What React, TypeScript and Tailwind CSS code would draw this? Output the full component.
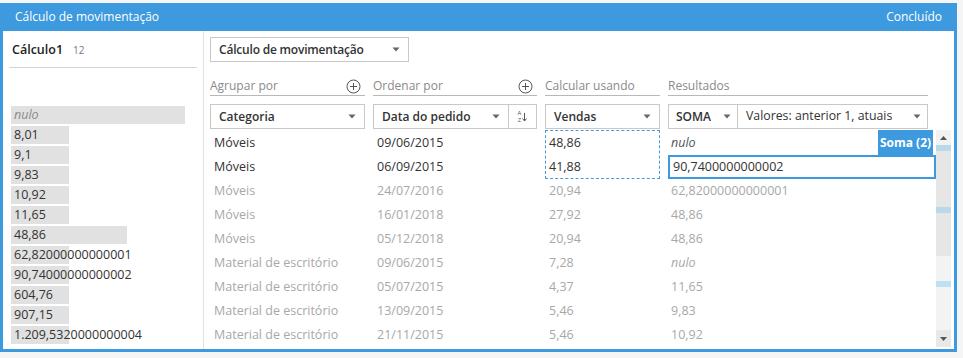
import React from "react";

const leftRows: { t: string; w: number; italic?: boolean }[] = [
  { t: "nulo", w: 174, italic: true },
  { t: "8,01", w: 58 },
  { t: "9,1", w: 58 },
  { t: "9,83", w: 58 },
  { t: "10,92", w: 58 },
  { t: "11,65", w: 58 },
  { t: "48,86", w: 116 },
  { t: "62,82000000000001", w: 58 },
  { t: "90,74000000000002", w: 58 },
  { t: "604,76", w: 58 },
  { t: "907,15", w: 58 },
  { t: "1.209,5320000000004", w: 58 },
];

const rows = [
  ["Móveis", "09/06/2015", "48,86", "nulo"],
  ["Móveis", "06/09/2015", "41,88", "90,7400000000002"],
  ["Móveis", "24/07/2016", "20,94", "62,82000000000001"],
  ["Móveis", "16/01/2018", "27,92", "48,86"],
  ["Móveis", "05/12/2018", "20,94", "48,86"],
  ["Material de escritório", "09/06/2015", "7,28", "nulo"],
  ["Material de escritório", "05/07/2015", "4,37", "11,65"],
  ["Material de escritório", "13/09/2015", "5,46", "9,83"],
  ["Material de escritório", "21/11/2015", "5,46", "10,92"],
];

function Tri() {
  return (
    <svg width="8" height="5" viewBox="0 0 8 5" className="shrink-0">
      <path d="M0.5 0.5 L7.5 0.5 L4 4.5 Z" fill="#666" />
    </svg>
  );
}

function PlusCircle() {
  return (
    <svg width="15" height="15" viewBox="0 0 15 15" className="shrink-0">
      <circle cx="7.5" cy="7.5" r="6.5" fill="none" stroke="#555" strokeWidth="1" />
      <path d="M7.5 4 V11 M4 7.5 H11" stroke="#555" strokeWidth="1" />
    </svg>
  );
}

function Cell({
  children,
  h = 24,
  dim,
  italic,
  cls = "",
}: {
  children: React.ReactNode;
  h?: number;
  dim?: boolean;
  italic?: boolean;
  cls?: string;
}) {
  return (
    <div
      className={`flex items-center whitespace-nowrap pt-[1px] ${h === 25 ? "h-[25px]" : h === 23 ? "h-[23px]" : "h-[24px]"} ${
        dim ? "text-[#a8a8a8]" : "text-[#333]"
      } ${italic ? "italic" : ""} ${cls}`}
    >
      {children}
    </div>
  );
}

export default function App() {
  return (
    <div
      className="w-[963px] h-[358px] bg-[#f5f5f5] pt-[3px] text-[12px]"
      style={{ fontFamily: '"Open Sans", "Noto Sans", sans-serif' }}
    >
      <div className="w-[957px] h-[349px] bg-[#3d9ade] flex flex-col">
        {/* Header */}
        <div className="h-[28px] flex items-center justify-between pl-[15px] pr-[15px] text-white text-[12px]">
          <span>Cálculo de movimentação</span>
          <span>Concluído</span>
        </div>
        {/* Body */}
        <div className="mx-[3px] mb-[3px] flex-1 bg-white flex">
          {/* Left panel */}
          <div className="w-[201px] border-r border-[#e2e2e2] flex flex-col">
            <div className="mx-[6px] h-[37px] border-b border-[#d4d4d4] flex items-center pl-[3px] pt-[2px]">
              <span className="text-[#222] font-semibold text-[12.5px]">Cálculo1</span>
              <span className="ml-[10px] text-[10px] text-[#7d7390]">12</span>
            </div>
            <div className="mt-[38px] pl-[8px] flex flex-col gap-[2px] text-[12.5px]">
              {leftRows.map((r, i) => (
                <div
                  key={i}
                  className={`h-[18px] bg-[#e1e1e1] flex items-center pl-[3px] whitespace-nowrap ${
                    r.italic ? "italic text-[#8a8a8a]" : "text-[#333]"
                  }`}
                  style={{ width: r.w }}
                >
                  {r.t}
                </div>
              ))}
            </div>
          </div>
          {/* Right panel */}
          <div className="flex-1 flex flex-col pl-[6px] pr-[3px] pt-[6px]">
            <div className="w-[199px] h-[25px] border border-[#c8c8c8] flex items-center justify-between pl-[8px] pr-[8px]">
              <span className="font-semibold text-[#333] tracking-[-0.2px]">Cálculo de movimentação</span>
              <Tri />
            </div>
            {/* Labels */}
            <div className="mt-[12px] flex gap-[8px] text-[#8a8a8a]">
              <div className="w-[155px] h-[22px] pt-[3px] border-b border-[#b8b8b8] flex items-center justify-between pr-[4px]">
                <span>Agrupar por</span>
                <PlusCircle />
              </div>
              <div className="w-[164px] h-[22px] pt-[3px] border-b border-[#b8b8b8] flex items-center justify-between pr-[4px]">
                <span>Ordenar por</span>
                <PlusCircle />
              </div>
              <div className="w-[115px] h-[22px] pt-[3px] border-b border-[#b8b8b8] flex items-center">
                <span>Calcular usando</span>
              </div>
              <div className="w-[260px] h-[22px] pt-[3px] border-b border-[#b8b8b8] flex items-center">
                <span>Resultados</span>
              </div>
            </div>
            {/* Dropdowns */}
            <div className="mt-[8px] flex gap-[8px] font-semibold text-[#333]">
              <div className="w-[155px] h-[25px] border border-[#c8c8c8] flex items-center justify-between pl-[8px] pr-[8px]">
                <span>Categoria</span>
                <Tri />
              </div>
              <div className="w-[164px] h-[25px] flex">
                <div className="flex-1 border border-[#c8c8c8] flex items-center justify-between pl-[8px] pr-[8px]">
                  <span>Data do pedido</span>
                  <Tri />
                </div>
                <div className="w-[28px] border border-l-0 border-[#c8c8c8] flex items-center justify-center gap-[1px] font-normal text-[#555]">
                  <div className="flex flex-col items-center gap-[1px]">
                    <span className="block text-[6px] leading-[6px]">A</span>
                    <span className="block text-[6px] leading-[6px]">Z</span>
                  </div>
                  <svg width="5" height="10" viewBox="0 0 5 10">
                    <path d="M2.5 1 V9 M0.5 6.5 L2.5 9 L4.5 6.5" stroke="#555" strokeWidth="1" fill="none" />
                  </svg>
                </div>
              </div>
              <div className="w-[115px] h-[25px] border border-[#c8c8c8] flex items-center justify-between pl-[8px] pr-[8px]">
                <span>Vendas</span>
                <Tri />
              </div>
              <div className="w-[260px] h-[25px] flex">
                <div className="w-[70px] border border-[#c8c8c8] flex items-center justify-between pl-[7px] pr-[6px]">
                  <span>SOMA</span>
                  <Tri />
                </div>
                <div className="flex-1 border border-l-0 border-[#c8c8c8] flex items-center justify-between pl-[8px] pr-[6px] font-normal text-[12.3px]">
                  <span>Valores: anterior 1, atuais</span>
                  <Tri />
                </div>
              </div>
            </div>
            {/* Data */}
            <div className="mt-[1px] flex text-[12.5px]">
              <div className="w-[155px] flex flex-col pl-[4px]">
                {rows.map((r, i) => (
                  <Cell key={i} h={i === 0 ? 25 : 24} dim={i > 1}>
                    {r[0]}
                  </Cell>
                ))}
              </div>
              <div className="w-[164px] ml-[8px] flex flex-col pl-[4px]">
                {rows.map((r, i) => (
                  <Cell key={i} h={i === 0 ? 25 : 24} dim={i > 1}>
                    {r[1]}
                  </Cell>
                ))}
              </div>
              <div className="w-[115px] ml-[8px] flex flex-col">
                <div className="h-[49px] border border-dashed border-[#4a9ad8] pl-[3px] flex flex-col">
                  <Cell h={24}>{rows[0][2]}</Cell>
                  <Cell h={23}>{rows[1][2]}</Cell>
                </div>
                {rows.slice(2).map((r, i) => (
                  <Cell key={i} dim cls="pl-[4px]">
                    {r[2]}
                  </Cell>
                ))}
              </div>
              <div className="w-[268px] ml-[8px] flex flex-col">
                <div className="relative">
                  <Cell h={25} italic cls="pl-[3px] text-[#555]">
                    nulo
                  </Cell>
                  <div className="absolute top-0 right-[3px] h-[25px] w-[55px] bg-[#3d9ade] text-white font-bold text-[12px] flex items-center justify-center whitespace-nowrap">
                    Soma (2)
                  </div>
                </div>
                <div className="h-[24px] border-2 border-[#3d9ade] flex items-center pl-[3px] text-[#333]">
                  {rows[1][3]}
                </div>
                {rows.slice(2).map((r, i) => (
                  <Cell key={i} dim italic={r[3] === "nulo"} cls="pl-[3px]">
                    {r[3]}
                  </Cell>
                ))}
              </div>
              {/* Scrollbar */}
              <div className="w-[15px] h-[217px] flex flex-col">
                <div className="h-[15px] bg-[#f2f2f2] flex items-center justify-center">
                  <svg width="7" height="4" viewBox="0 0 7 4">
                    <path d="M0 4 L7 4 L3.5 0 Z" fill="#555" />
                  </svg>
                </div>
                <div className="h-[111px] bg-[#e6e6e6] flex flex-col">
                  <div className="h-[6px] bg-[#b9d8ea]" />
                  <div className="h-[56px]" />
                  <div className="h-[6px] bg-[#b9d8ea]" />
                </div>
                <div className="flex-1 bg-[#f3f3f3] flex flex-col">
                  <div className="h-[25px]" />
                  <div className="h-[6px] bg-[#bde0f5]" />
                  <div className="flex-1" />
                  <div className="h-[17px] bg-[#e8e8e8] flex items-center justify-center">
                    <svg width="7" height="4" viewBox="0 0 7 4">
                      <path d="M0 0 L7 0 L3.5 4 Z" fill="#555" />
                    </svg>
                  </div>
                </div>
              </div>
            </div>
          </div>
        </div>
      </div>
    </div>
  );
}
